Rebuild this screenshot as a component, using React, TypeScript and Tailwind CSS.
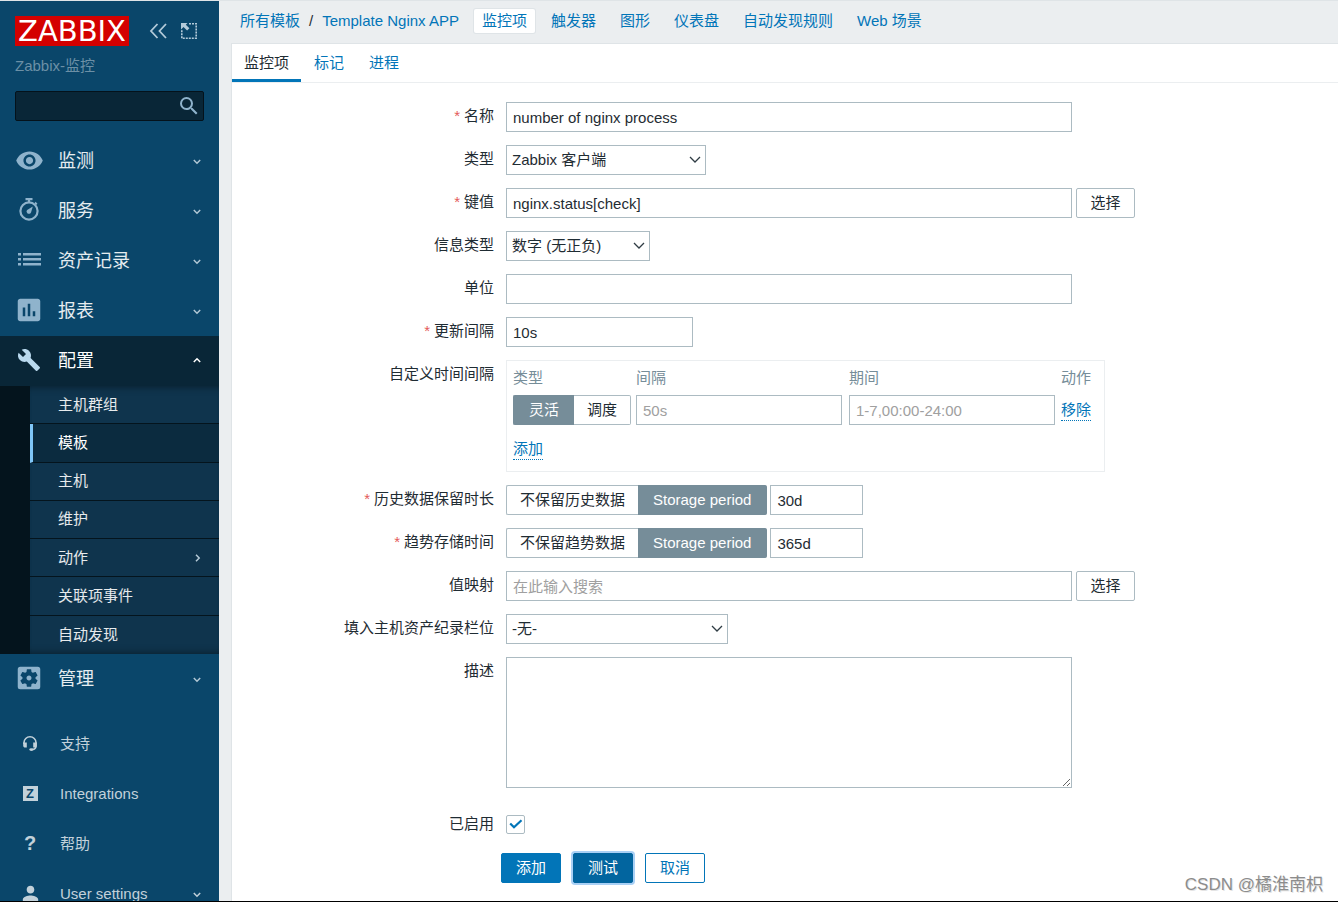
import { useState } from "react";
import type { ReactNode } from "react";
import clsx from "clsx";
import { MdAssessment, MdBuild, MdPerson, MdSearch, MdSettingsApplications, MdVisibility } from "react-icons/md";

const inputClass =
    "h-[30px] max-w-full border border-[#acbbc2] bg-white px-1.5 text-[#1f2c33] outline-none placeholder:text-[#a0a0a0]";

/* ---------- Icons ---------- */

const Chevron = ({ className }: { className?: string }) => (
    <svg viewBox="0 0 10 10" className={clsx("size-2.5 shrink-0", className)} fill="none" stroke="currentColor" strokeWidth="1.5">
        <path d="M1.8 4 5 7.2 8.2 4" />
    </svg>
);

const StopwatchIcon = () => (
    <svg viewBox="0 0 24 24" className="size-6" fill="none" stroke="currentColor">
        <circle cx="12" cy="13" r="8.6" strokeWidth="2.2" />
        <path d="M8.5 1.2h7M12 1v3.5" strokeWidth="2.2" />
        <path d="M18 4.5l1.8 1.8" strokeWidth="1.8" />
        <path d="M15.8 8.6l-1.7 5.6a2.3 2.3 0 1 1-3.6-2.5z" fill="currentColor" stroke="none" />
    </svg>
);

const ListIcon = () => (
    <svg viewBox="0 0 23 14" className="h-3.5 w-[23px]" fill="currentColor">
        <path d="M0 0h3v2.4H0zM0 5h3v2.4H0zM0 10h3v2.4H0zM5 0h18v2.4H5zM5 5h18v2.4H5zM5 10h18v2.4H5z" />
    </svg>
);

const HeadsetIcon = () => (
    <svg viewBox="0 0 14 15" className="h-[15px] w-3.5" fill="none" stroke="currentColor" strokeWidth="1.6">
        <path d="M1 8V6.6a6 5.8 0 0 1 12 0V10c0 2.2-1.4 3.3-3.8 3.6" />
        <path d="M.2 6.6h3.6v5H2.2c-1.2 0-2-.8-2-1.8zM13.8 6.6h-3.6v5h1.6c1.2 0 2-.8 2-1.8z" fill="currentColor" stroke="none" />
        <ellipse cx="8.3" cy="13.6" rx="2" ry="1.3" fill="currentColor" stroke="none" />
    </svg>
);

/* ---------- Sidebar ---------- */

const menu = [
    { label: "监测", icon: <MdVisibility size={29} /> },
    { label: "服务", icon: <StopwatchIcon /> },
    { label: "资产记录", icon: <ListIcon /> },
    { label: "报表", icon: <MdAssessment size={30} /> },
];

const configMenu = ["主机群组", "模板", "主机", "维护", "动作", "关联项事件", "自动发现"];

const supportMenu = [
    { label: "支持", icon: <HeadsetIcon /> },
    {
        label: "Integrations",
        icon: (
            <span className="flex size-[15px] items-center justify-center bg-current">
                <span className="text-[13px] leading-none font-bold text-[#0a466a]">Z</span>
            </span>
        ),
    },
    { label: "帮助", icon: <span className="text-xl leading-none font-bold">?</span> },
    { label: "User settings", icon: <MdPerson size={23} />, arrow: true },
];

type MenuItemProps = { label: string; icon: ReactNode; open?: boolean };

const MenuItem = ({ label, icon, open = false }: MenuItemProps) => (
    <a
        href="#"
        className={clsx("flex h-[50px] items-center pr-[17px] text-lg", open ? "bg-[#092637] text-white" : "text-white/90")}
    >
        <span className={clsx("flex w-[58px] justify-center pb-0.5", open ? "text-[#b9d9ee]" : "text-[#8fb3cc]")}>{icon}</span>
        <span className="flex-1">{label}</span>
        <Chevron className={open ? "rotate-180 text-white" : "text-[#b3c8d5]"} />
    </a>
);

const Sidebar = () => (
    <aside className="w-[219px] shrink-0 overflow-hidden bg-[#0a466a]">
        <div className="px-[15px] pt-[15px]">
            <div className="flex items-center justify-between pr-[7px]">
                <a
                    href="#"
                    className="flex h-[30px] w-[114px] items-center justify-center bg-[#d40000] font-['DejaVu_Sans'] text-[29px] leading-none text-white"
                >
                    ZABBIX
                </a>
                <div className="flex items-center gap-3.5 text-[#b3cad9]">
                    <button aria-label="Hide sidebar">
                        <svg viewBox="0 0 18 16" className="h-4 w-[18px]" fill="none" stroke="currentColor" strokeWidth="1.8">
                            <path d="M8.5 1 2 8l6.5 7M17 1l-6.5 7 6.500 7" />
                        </svg>
                    </button>
                    <button aria-label="Kiosk mode">
                        <svg viewBox="0 0 16 16" className="size-4" fill="none" stroke="currentColor">
                            <path d="M8 .8h7.2v14.4H.8V7" strokeWidth="1.6" strokeDasharray="2 1" />
                            <path d="M0 0h6.500L4.800 1.700l3.600 3.600-2.300 2.300-3.600-3.600L0 6.500z" fill="currentColor" stroke="none" />
                        </svg>
                    </button>
                </div>
            </div>
            <div className="mt-2 leading-6 text-[#6c90a6]">Zabbix-监控</div>
            <label className="mt-[13px] flex h-[30px] items-center rounded-xs border border-[#04121b] bg-[#092637] pr-0.5">
                <input type="text" aria-label="Search" className="min-w-0 flex-1 bg-transparent px-1.5 text-white outline-none" />
                <MdSearch size={24} className="text-[#8fb3cc]" />
            </label>
        </div>

        <nav className="mt-[15px]">
            {menu.map((item) => (
                <MenuItem key={item.label} {...item} />
            ))}
            <MenuItem label="配置" icon={<MdBuild size={24} />} open />
            <div className="grid h-[268px] auto-rows-fr divide-y divide-[#04141d] border-l-[30px] border-l-[#04141d] bg-[#0f344d] shadow-[inset_0_8px_8px_-8px_rgba(0,0,0,0.5),inset_0_-8px_8px_-8px_rgba(0,0,0,0.5)]">
                {configMenu.map((label) => (
                    <a
                        key={label}
                        href="#"
                        className={clsx(
                            "flex items-center pr-[17px]",
                            label === "模板"
                                ? "border-l-3 border-l-[#7fc6f8] bg-[#0b2b3f] pl-[25px] text-white"
                                : "pl-7 text-white/90"
                        )}
                    >
                        <span className="flex-1">{label}</span>
                        {label === "动作" && <Chevron className="-rotate-90 text-[#b3c8d5]" />}
                    </a>
                ))}
            </div>
            <MenuItem label="管理" icon={<MdSettingsApplications size={30} />} />
        </nav>

        <nav className="mt-[15px]">
            {supportMenu.map(({ label, icon, arrow }) => (
                <a key={label} href="#" className="flex h-[50px] items-center pr-[17px] text-[#c2d1da]">
                    <span className="flex w-[60px] justify-center pb-0.5">{icon}</span>
                    <span className="flex-1">{label}</span>
                    {arrow && <Chevron />}
                </a>
            ))}
        </nav>
    </aside>
);

/* ---------- Form parts ---------- */

type RowProps = { label: string; htmlFor?: string; required?: boolean; children: ReactNode };

const Row = ({ label, htmlFor, required, children }: RowProps) => (
    <div className="grid grid-cols-[262px_minmax(0,1fr)] gap-x-3">
        <label htmlFor={htmlFor} className="text-right leading-7">
            {required && <span className="mr-1 text-[#e45959]">*</span>}
            {label}
        </label>
        <div className="flex flex-wrap items-center gap-1">{children}</div>
    </div>
);

const Select = ({ id, className, value }: { id: string; className: string; value: string }) => (
    <div className={clsx("grid items-center", className)}>
        <select
            id={id}
            className="col-start-1 row-start-1 h-[30px] w-full appearance-none border border-[#acbbc2] bg-white pr-6 pl-[5px] outline-none"
        >
            <option>{value}</option>
        </select>
        <svg
            viewBox="0 0 12 8"
            className="pointer-events-none col-start-1 row-start-1 mr-[5px] h-2 w-3 justify-self-end"
            fill="none"
            stroke="#2f3c44"
            strokeWidth="1.3"
        >
            <path d="M1 1l5 5 5-5" />
        </svg>
    </div>
);

type SegmentedProps = { name: string; options: string[]; initial: number };

const Segmented = ({ name, options, initial }: SegmentedProps) => {
    const [selected, setSelected] = useState(initial);

    return (
        <div className="flex" role="radiogroup" aria-label={name}>
            {options.map((option, i) => (
                <label
                    key={option}
                    className={clsx(
                        "h-[30px] cursor-pointer border-y leading-7 whitespace-nowrap first:rounded-l-xs first:border-l last:rounded-r-xs last:border-r",
                        i === selected ? "border-[#768d99] bg-[#768d99] px-[15px] text-white" : "border-[#acbbc2] px-[13px]"
                    )}
                >
                    <input
                        type="radio"
                        name={name}
                        checked={i === selected}
                        onChange={() => setSelected(i)}
                        className="sr-only"
                    />
                    {option}
                </label>
            ))}
        </div>
    );
};

type StorageFieldProps = { id: string; offLabel: string; value: string };

const StorageField = ({ id, offLabel, value }: StorageFieldProps) => (
    <div className="flex gap-[3px]">
        <Segmented name={`${id}-mode`} options={[offLabel, "Storage period"]} initial={1} />
        <input id={id} defaultValue={value} className={clsx(inputClass, "w-[93px]")} />
    </div>
);

const SelectButton = () => (
    <button type="button" className="h-[30px] w-[59px] rounded-xs border border-[#acbbc2] bg-white">
        选择
    </button>
);

const DottedLink = ({ children }: { children: ReactNode }) => (
    <a href="#" className="inline-block border-b border-dotted border-[#0275b8] leading-5 text-[#0275b8]">
        {children}
    </a>
);

const IntervalTable = () => (
    <div className="w-[599px] max-w-full border border-[#ebeef0] pt-[5px] pb-2 pl-1.5">
        <table className="w-full table-fixed text-left">
            <thead className="text-[#768d99]">
                <tr className="h-6">
                    <th className="w-[123px] font-normal">类型</th>
                    <th className="w-[213px] font-normal">间隔</th>
                    <th className="w-[212px] font-normal">期间</th>
                    <th className="font-normal">动作</th>
                </tr>
            </thead>
            <tbody>
                <tr>
                    <td className="pt-[5px]">
                        <Segmented name="interval-type" options={["灵活", "调度"]} initial={0} />
                    </td>
                    <td className="pt-[5px]">
                        <input aria-label="间隔" placeholder="50s" className={clsx(inputClass, "block w-[206px]")} />
                    </td>
                    <td className="pt-[5px]">
                        <input aria-label="期间" placeholder="1-7,00:00-24:00" className={clsx(inputClass, "block w-[206px]")} />
                    </td>
                    <td className="pt-[5px]">
                        <DottedLink>移除</DottedLink>
                    </td>
                </tr>
                <tr>
                    <td className="h-[38px] pt-2.5" colSpan={4}>
                        <DottedLink>添加</DottedLink>
                    </td>
                </tr>
            </tbody>
        </table>
    </div>
);

const ItemForm = () => (
    <form className="pt-[19px]" onSubmit={(e) => e.preventDefault()}>
        <div className="flex flex-col gap-[13px]">
            <Row label="名称" htmlFor="name" required>
                <input id="name" defaultValue="number of nginx process" className={clsx(inputClass, "w-[566px]")} />
            </Row>
            <Row label="类型" htmlFor="type">
                <Select id="type" value="Zabbix 客户端" className="w-[200px]" />
            </Row>
            <Row label="键值" htmlFor="key" required>
                <input id="key" defaultValue="nginx.status[check]" className={clsx(inputClass, "w-[566px]")} />
                <SelectButton />
            </Row>
            <Row label="信息类型" htmlFor="value-type">
                <Select id="value-type" value="数字 (无正负)" className="w-36" />
            </Row>
            <Row label="单位" htmlFor="units">
                <input id="units" className={clsx(inputClass, "w-[566px]")} />
            </Row>
            <Row label="更新间隔" htmlFor="delay" required>
                <input id="delay" defaultValue="10s" className={clsx(inputClass, "w-[187px]")} />
            </Row>
            <Row label="自定义时间间隔">
                <IntervalTable />
            </Row>
            <Row label="历史数据保留时长" htmlFor="history" required>
                <StorageField id="history" offLabel="不保留历史数据" value="30d" />
            </Row>
            <Row label="趋势存储时间" htmlFor="trends" required>
                <StorageField id="trends" offLabel="不保留趋势数据" value="365d" />
            </Row>
            <Row label="值映射" htmlFor="valuemap">
                <input id="valuemap" placeholder="在此输入搜索" className={clsx(inputClass, "w-[566px]")} />
                <SelectButton />
            </Row>
            <Row label="填入主机资产纪录栏位" htmlFor="inventory">
                <Select id="inventory" value="-无-" className="w-[222px]" />
            </Row>
            <Row label="描述" htmlFor="description">
                <textarea
                    id="description"
                    className="block h-[131px] w-[566px] max-w-full resize border border-[#acbbc2] px-1.5 py-1 outline-none"
                />
            </Row>
        </div>

        <div className="mt-[22px]">
            <Row label="已启用" htmlFor="enabled">
                <span className="grid size-[19px] place-items-center">
                    <input
                        id="enabled"
                        type="checkbox"
                        defaultChecked
                        className="peer col-start-1 row-start-1 size-[19px] appearance-none rounded-xs border border-[#acbbc2] bg-white"
                    />
                    <svg
                        viewBox="0 0 14 10"
                        className="pointer-events-none invisible col-start-1 row-start-1 h-2.5 w-3.5 peer-checked:visible"
                        fill="none"
                        stroke="#0275b8"
                        strokeWidth="2.2"
                    >
                        <path d="M1.2 4.5 5 8.300l7.500-7" />
                    </svg>
                </span>
            </Row>
        </div>

        <div className="mt-[15px] flex gap-3 pl-[269px]">
            <button type="submit" className="h-[30px] w-[60px] rounded-xs border border-[#0275b8] bg-[#0275b8] text-white">
                添加
            </button>
            <button
                type="button"
                className="h-[30px] w-[60px] rounded-xs border border-[#02659f] bg-[#02659f] text-white ring-2 ring-[#a9d0f5]"
            >
                测试
            </button>
            <button type="button" className="h-[30px] w-[60px] rounded-xs border border-[#0275b8] bg-white text-[#0275b8]">
                取消
            </button>
        </div>
    </form>
);

/* ---------- Page ---------- */

const objectLinks = ["监控项", "触发器", "图形", "仪表盘", "自动发现规则", "Web 场景"];

const App = () => (
    <div className="relative flex h-screen overflow-hidden border-t border-b border-t-[#dfe4e7] border-b-black bg-[#ebeef0] font-['Liberation_Sans','Noto_Sans_CJK_SC',sans-serif] text-[15px] leading-5 text-[#1f2c33]">
        <Sidebar />

        <div className="flex min-w-0 flex-1 flex-col pl-3">
            <nav className="flex h-[42px] shrink-0 items-center pb-0.5 whitespace-nowrap text-[#0275b8]">
                <div className="mr-[15px] flex gap-[9px] pl-[9px]">
                    <a href="#">所有模板</a>
                    <span className="text-[#1f2c33]">/</span>
                    <a href="#">Template Nginx APP</a>
                </div>
                <div className="flex gap-2">
                    {objectLinks.map((label, i) => (
                        <a
                            key={label}
                            href="#"
                            className={clsx("px-2 py-0.5", i === 0 && "rounded-xs bg-white shadow-[0_0_0_1px_#dfe4e7]")}
                        >
                            {label}
                        </a>
                    ))}
                </div>
            </nav>

            <main className="min-h-0 flex-1 overflow-y-auto border-t border-l border-[#dfe4e7] bg-white">
                <div className="flex gap-px border-b border-[#ebeef0]">
                    {["监控项", "标记", "进程"].map((tab, i) => (
                        <button
                            key={tab}
                            type="button"
                            className={clsx(
                                "h-[38px] border-b-3 px-3 pt-0.5",
                                i === 0 ? "border-[#0275b8]" : "border-transparent text-[#0275b8]"
                            )}
                        >
                            {tab}
                        </button>
                    ))}
                </div>
                <ItemForm />
            </main>
        </div>

        <div className="pointer-events-none absolute right-[15px] bottom-1 text-[17px] leading-6 text-[#8c8c8c] [text-shadow:1px_1px_0_#e4e4e4]">
            CSDN @橘淮南枳
        </div>
    </div>
);

export default App;
